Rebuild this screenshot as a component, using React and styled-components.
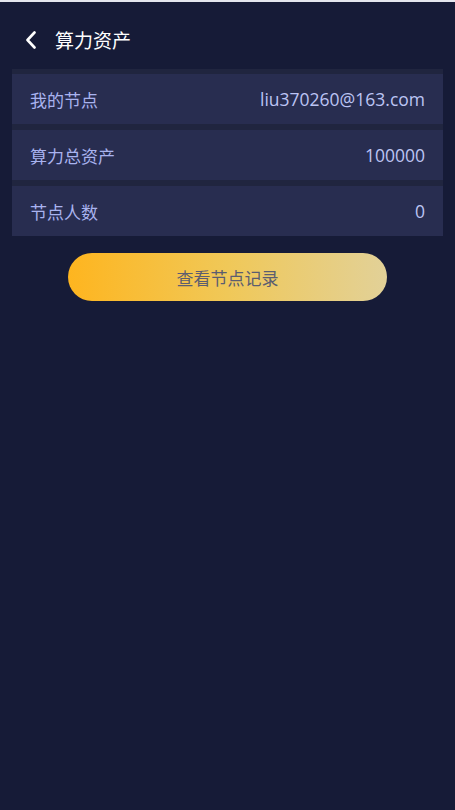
import React from "react";
import styled, { createGlobalStyle } from "styled-components";

const GlobalStyle = createGlobalStyle`
  html, body {
    margin: 0;
    padding: 0;
    background-color: #161b37;
  }
  body {
    font-family: "Noto Sans CJK SC", "Noto Sans", sans-serif;
  }
`;

const Page = styled.div`
  min-height: 100vh;
  background-color: #161b37;
  border-top: 2px solid #e4e6ee;
  box-sizing: border-box;
`;

const Header = styled.div`
  height: 67px;
  padding: 18px 0 10px 25px;
  box-sizing: border-box;
  display: flex;
  align-items: center;
  gap: 18px;
  color: #ffffff;
`;

const Title = styled.h1`
  margin: 0;
  font-size: 19px;
  font-weight: 400;
  line-height: 1;
`;

const List = styled.div`
  margin: 0 12px;
  padding-top: 5px;
  background-color: #20253f;
  display: flex;
  flex-direction: column;
  gap: 6px;
`;

const Row = styled.div`
  height: 50px;
  padding: 0 18px;
  background-color: #282d50;
  display: flex;
  align-items: center;
  justify-content: space-between;
  font-size: 17px;
  color: #a9b3ef;
`;

const Value = styled.span`
  font-family: "Open Sans", "Noto Sans CJK SC", sans-serif;
  font-size: 17.5px;
  color: #bcc4f4;
`;

const Button = styled.button`
  display: block;
  margin: 17px auto 0;
  width: 319px;
  height: 48px;
  border: none;
  border-radius: 24px;
  background: linear-gradient(90deg, #feb51f 0%, #f0c858 50%, #e2d198 100%);
  color: #5b5d70;
  font-family: "Noto Sans CJK SC", sans-serif;
  font-size: 17px;
`;

const rows = [
  { label: "我的节点", value: "liu370260@163.com" },
  { label: "算力总资产", value: "100000" },
  { label: "节点人数", value: "0" },
];

function App() {
  return (
    <Page>
      <GlobalStyle />
      <Header>
        <svg width="12" height="18" viewBox="0 0 12 18">
          <polyline
            points="9.5,1.5 2.5,9 9.5,16.5"
            fill="none"
            stroke="#ffffff"
            strokeWidth="2.6"
            strokeLinecap="round"
            strokeLinejoin="round"
          />
        </svg>
        <Title>算力资产</Title>
      </Header>
      <List>
        {rows.map((r) => (
          <Row key={r.label}>
            <span>{r.label}</span>
            <Value>{r.value}</Value>
          </Row>
        ))}
      </List>
      <Button>查看节点记录</Button>
    </Page>
  );
}

export default App;
